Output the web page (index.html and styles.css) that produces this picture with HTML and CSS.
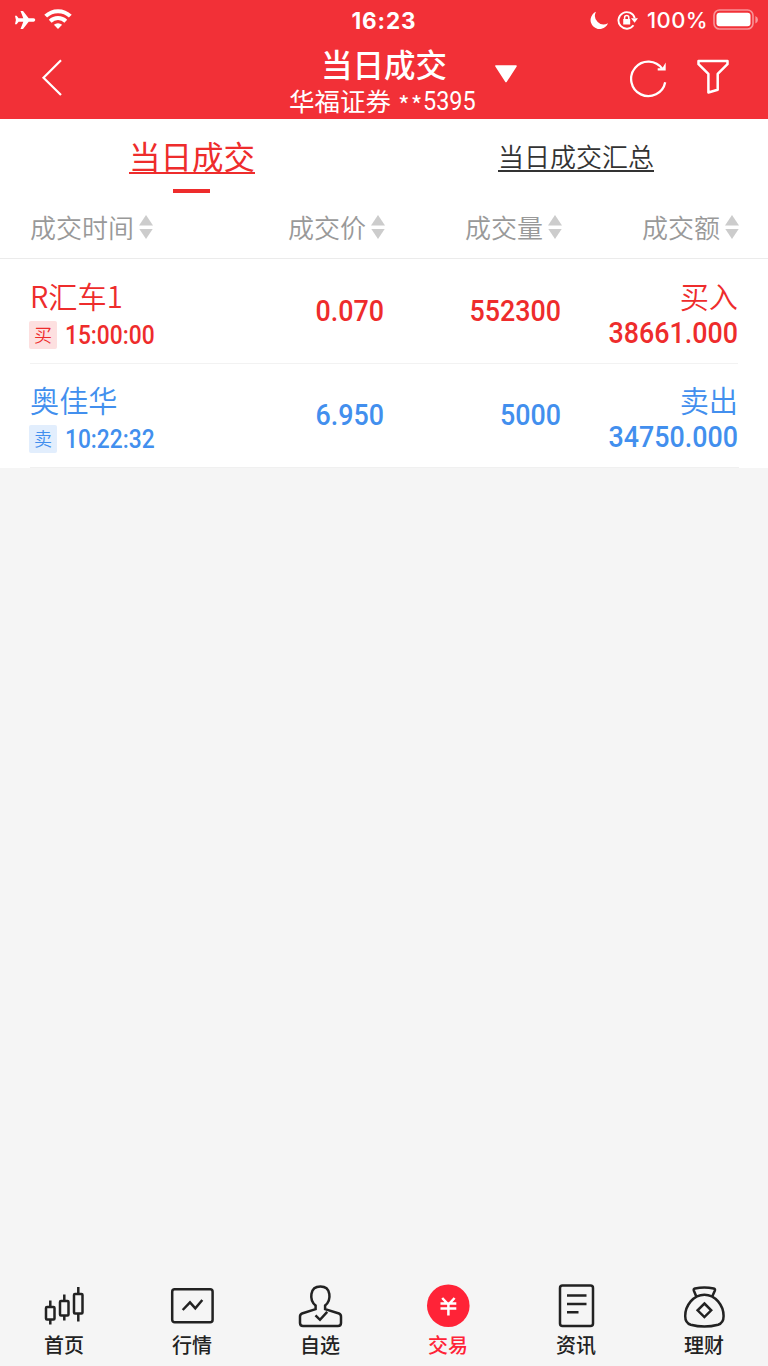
FILE: index.html
```html
<!DOCTYPE html>
<html lang="zh-CN">
<head>
<meta charset="utf-8">
<title>当日成交</title>
<link rel="stylesheet" href="styles.css">
</head>
<body>
<div class="app">
  <header class="header">
    <div class="status">
      <div class="status-left">
        <svg width="22" height="20" viewBox="0 0 22 20"><path fill="#fff" d="M19.500 8.300h-4.800L9 1H6.500l2.800 7.300H4.600L2.700 5.800H1l.9 4.200-.9 4.200h1.700l1.900-2.500h4.700L6.500 19H9l5.700-7.300h4.800c2.300 0 2.300-3.400 0-3.400z"/></svg>
        <svg class="wifi" width="28" height="22" viewBox="0 0 28 22"><g fill="none" stroke="#fff" stroke-width="4"><path d="M1.700 8.200a17.500 17.500 0 0 1 24.600 0"/><path d="M6.200 13.200a11.200 11.200 0 0 1 15.600 0"/></g><path fill="#fff" d="M14 21l-4.100-4.200a5.900 5.900 0 0 1 8.200 0z"/></svg>
      </div>
      <div class="clock">16:23</div>
      <div class="status-right">
        <svg width="19" height="18" viewBox="0 0 19 18"><path fill="#fff" d="M6 0.800a9 9 0 1 0 12 11.400A8.600 8.600 0 0 1 6 .8z"/></svg>
        <svg class="lock" width="21" height="20" viewBox="0 0 21 20"><path fill="none" stroke="#fff" stroke-width="1.900" d="M16.500 15.300A8.300 8.300 0 1 1 17.700 8"/><path fill="#fff" d="M14 8.200h7l-3.400 4.500zM6.200 9h7v5.600h-7z"/><path fill="none" stroke="#fff" stroke-width="1.500" d="M7.600 9.500V7.700a2.100 2.100 0 0 1 4.200 0v1.800"/></svg>
        <span class="percent">100%</span>
        <svg width="46" height="22" viewBox="0 0 46 22"><rect x="1" y="1" width="39" height="19" rx="5.500" fill="none" stroke="#fff" stroke-opacity=".48" stroke-width="1.600"/><rect x="3.500" y="3.800" width="34" height="13.500" rx="3" fill="#fff"/><path fill="#fff" fill-opacity=".5" d="M42.400 7q2.600 1.200 2.600 3.700t-2.600 3.700z"/></svg>
      </div>
    </div>
    <div class="titlebar">
      <svg class="back" width="24" height="40" viewBox="0 0 24 40"><path d="M20 3.300L2.500 20.700 20 38" fill="none" stroke="#fff" stroke-width="2.200"/></svg>
      <div class="titles">
        <h1>当日成交</h1>
        <div class="account"><span>华福证券</span><span class="mask">**</span><span class="digits">5395</span></div>
      </div>
      <svg class="drop" width="24" height="20" viewBox="0 0 24 20"><path d="M2 2h20L12 17.500z" fill="#fff" stroke="#fff" stroke-width="1.600" stroke-linejoin="round"/></svg>
      <div class="actions">
        <svg width="38" height="40" viewBox="0 0 38 40"><path d="M35.200 24.200A17.200 17.200 0 1 1 32.400 11" fill="none" stroke="#fff" stroke-width="2.300"/><path fill="#fff" d="M35.700 4.500v8h-8v-2.200h4.600z"/></svg>
        <svg width="34" height="40" viewBox="0 0 34 40"><path d="M2.500 3h29v3.200l-9.800 9.700v15.800L12.400 34.500V15.900L2.500 6.200z" fill="none" stroke="#fff" stroke-width="2.500" stroke-linejoin="round"/></svg>
      </div>
    </div>
  </header>

  <nav class="tabs">
    <div class="tab active"><span class="tab-label">当日成交</span><i class="marker"></i></div>
    <div class="tab"><span class="tab-label">当日成交汇总</span></div>
  </nav>

  <main class="deals">
    <div class="grid head">
      <div>成交时间<i class="sort"></i></div>
      <div>成交价<i class="sort"></i></div>
      <div>成交量<i class="sort"></i></div>
      <div>成交额<i class="sort"></i></div>
    </div>
    <div class="grid row buy">
      <div class="stock"><div class="name">R汇车1</div><div class="time"><b class="tag">买</b><span>15:00:00</span></div></div>
      <div class="num">0.070</div>
      <div class="num">552300</div>
      <div class="sum"><div class="name">买入</div><div class="num">38661.000</div></div>
    </div>
    <div class="grid row sell">
      <div class="stock"><div class="name">奥佳华</div><div class="time"><b class="tag">卖</b><span>10:22:32</span></div></div>
      <div class="num">6.950</div>
      <div class="num">5000</div>
      <div class="sum"><div class="name">卖出</div><div class="num">34750.000</div></div>
    </div>
  </main>

  <footer class="bottom">
    <div class="item"><svg width="46" height="46" viewBox="0 0 46 46"><rect x="5" y="24" width="8.500" height="12.500" rx="1"/><path d="M9.300 17.500V24M9.300 36.500v5"/><rect x="19" y="18" width="8.500" height="14.500" rx="1"/><path d="M23.300 11.500V18M23.300 32.500v5"/><rect x="33" y="11" width="8.500" height="19.500" rx="1"/><path d="M37.300 4v7M37.300 30.500v8"/></svg>首页</div>
    <div class="item"><svg width="46" height="46" viewBox="0 0 46 46"><rect x="3.200" y="6.300" width="40.400" height="33" rx="2.500"/><path d="M13.700 27l7.300-7.700 5.300 6L33.300 17"/></svg>行情</div>
    <div class="item"><svg width="46" height="46" viewBox="0 0 46 46"><path d="M18.600 22.500C12 17 12.500 3.500 23.400 3.500s11.300 13.500 4.700 19v3.700L42 30.500q2 .8 2 3.200V40q0 3-3 3H6q-3 0-3-3v-6.300q0-2.400 2-3.200l13.600-4.300z"/><path d="M18.500 32.300l4.500 4.500 7.200-8"/></svg>自选</div>
    <div class="item active"><svg width="46" height="46" viewBox="0 0 46 46"><circle cx="23.300" cy="22.700" r="21.300"/><path d="M17.200 15l6.200 6.700 6.200-6.700M15.500 20.500h15.800M15.500 25.500h15.800M23.400 21v11.500"/></svg>交易</div>
    <div class="item"><svg width="46" height="46" viewBox="0 0 46 46"><rect x="7" y="2.500" width="33" height="40.500" rx="2.500"/><path d="M14 12.500h19.500M14 21h19.500M14 29.300h11.500"/></svg>资讯</div>
    <div class="item"><svg width="46" height="46" viewBox="0 0 46 46"><path d="M15.500 14L12.800 7.500Q12.300 6 14 5.500q9.300-2 18.700 0 1.700.5 1.200 2L31 14"/><path d="M23.400 11.700C12.500 11.700 4.200 22.500 4.200 33q0 7 5.500 8.700 13.700 3.600 27.400 0 5.500-1.700 5.500-8.700c0-10.500-8.300-21.300-19.200-21.300zM23.400 20.500l6.800 6.800-6.800 6.800-6.800-6.800z"/></svg>理财</div>
  </footer>
</div>
</body>
</html>
```
FILE: styles.css
```css
* { box-sizing: border-box; }
body { margin: 0; background: #f5f5f5; font-family: "Noto Sans CJK SC", sans-serif; }
svg { display: block; flex: none; }
.app { width: 768px; height: 1366px; display: flex; flex-direction: column; }

.header { height: 119px; background: #f23037; color: #fff; }
.status { height: 40px; display: grid; grid-template-columns: 1fr auto 1fr; align-items: center; font-family: Inter, sans-serif; }
.status-left { display: flex; align-items: center; padding-left: 14px; gap: 8px; }
.wifi { margin-top: -3px; }
.clock { font-size: 22.500px; font-weight: 700; letter-spacing: .9px; }
.status-right { display: flex; align-items: center; justify-content: flex-end; padding-right: 9px; }
.lock { margin-left: 8px; }
.percent { margin: 0 5px 0 9px; font-size: 22px; font-weight: 500; letter-spacing: .4px; }
.titlebar { height: 79px; display: grid; grid-template-columns: 289px 190px 289px; position: relative; }
.back { margin: 17px 0 0 41px; }
.titles { text-align: center; white-space: nowrap; }
.titles h1 { margin: 0; padding-top: 5px; height: 45px; line-height: 36px; font-size: 31.500px; font-weight: 500; }
.account { display: flex; height: 29px; line-height: 29px; font-size: 25.500px; }
.mask { font-size: 25px; padding-top: 5px; margin-left: 7px; letter-spacing: 1px; line-height: 28px; }
.digits { font-family: Roboto, sans-serif; line-height: 32px; transform: scaleX(.92); transform-origin: left; }
.drop { position: absolute; left: 494px; top: 24px; }
.actions { display: flex; padding: 18px 0 0 151px; gap: 28px; }

.tabs { height: 79px; display: grid; grid-template-columns: 1fr 1fr; background: #fff; color: #333; }
.tab { display: flex; flex-direction: column; align-items: center; }
.tab-label { margin-top: 18px; height: 35px; line-height: 38px; font-size: 26px; font-weight: 350; border-bottom: 2px solid #333; }
.active .tab-label { margin-top: 15px; height: 40px; line-height: 43px; font-size: 31.500px; font-weight: 400; border-color: #ee2c2c; color: #ee2c2c; }
.marker { width: 37px; height: 4px; margin: 15px 1px 0 0; background: #ee2c2c; }

.deals { height: 270px; background: linear-gradient(#f0f0f0, #f0f0f0) 30px 269px / 709px 1px no-repeat #fff; }
.grid { display: grid; grid-template-columns: 224px 130px 177px 177px; padding: 0 30px; text-align: right; }
.head { height: 61px; border-bottom: 1px solid #ebebeb; line-height: 56px; font-size: 26px; font-weight: 350; color: #999; }
.head > div { display: flex; justify-content: flex-end; align-items: center; height: 58px; gap: 5px; margin-right: -1px; }
.head > div:first-child { justify-content: flex-start; }
.sort { width: 14px; height: 24px; display: flex; flex-direction: column; justify-content: space-between; }
.sort::before, .sort::after { content: ""; height: 10.500px; background: #ccc; clip-path: polygon(50% 0, 100% 100%, 0 100%); }
.sort::after { clip-path: polygon(0 0, 100% 0, 50% 100%); }
.row { height: 104px; }
.row + .row { background: linear-gradient(#f2f2f2, #f2f2f2) 30px 0 / 708px 1px no-repeat; }
.buy { color: #ee2c2c; }
.sell { color: #428fee; }
.stock { text-align: left; }
.name { height: 56px; line-height: 72px; font-size: 29.200px; font-weight: 350; }
.time { display: flex; height: 40px; align-items: center; margin-left: -1px; }
.time span { font: 500 26px/40px Roboto, sans-serif; transform: scaleX(.875); transform-origin: left; margin-left: 8px; }
.tag { width: 28px; height: 28px; border-radius: 2px; font-size: 18px; line-height: 27px; text-align: center; font-weight: 350; }
.buy .tag { background: #fde0e0; }
.sell .tag { background: #e2eefd; }
.num { font: 500 29px/104px Roboto, sans-serif; transform: scaleX(.925); transform-origin: right; }
.sum .num { line-height: 36px; }

.bottom { margin-top: auto; height: 83px; display: grid; grid-template-columns: repeat(6, 1fr); }
.item { display: flex; flex-direction: column; align-items: center; font-size: 20px; line-height: 31px; font-weight: 500; color: #222; }
.item svg { fill: none; stroke: #222; stroke-width: 2.500; }
.item.active { color: #ff2337; }
.item.active circle { fill: #ff2337; stroke: none; }
.item.active path { stroke: #fff; }
```
